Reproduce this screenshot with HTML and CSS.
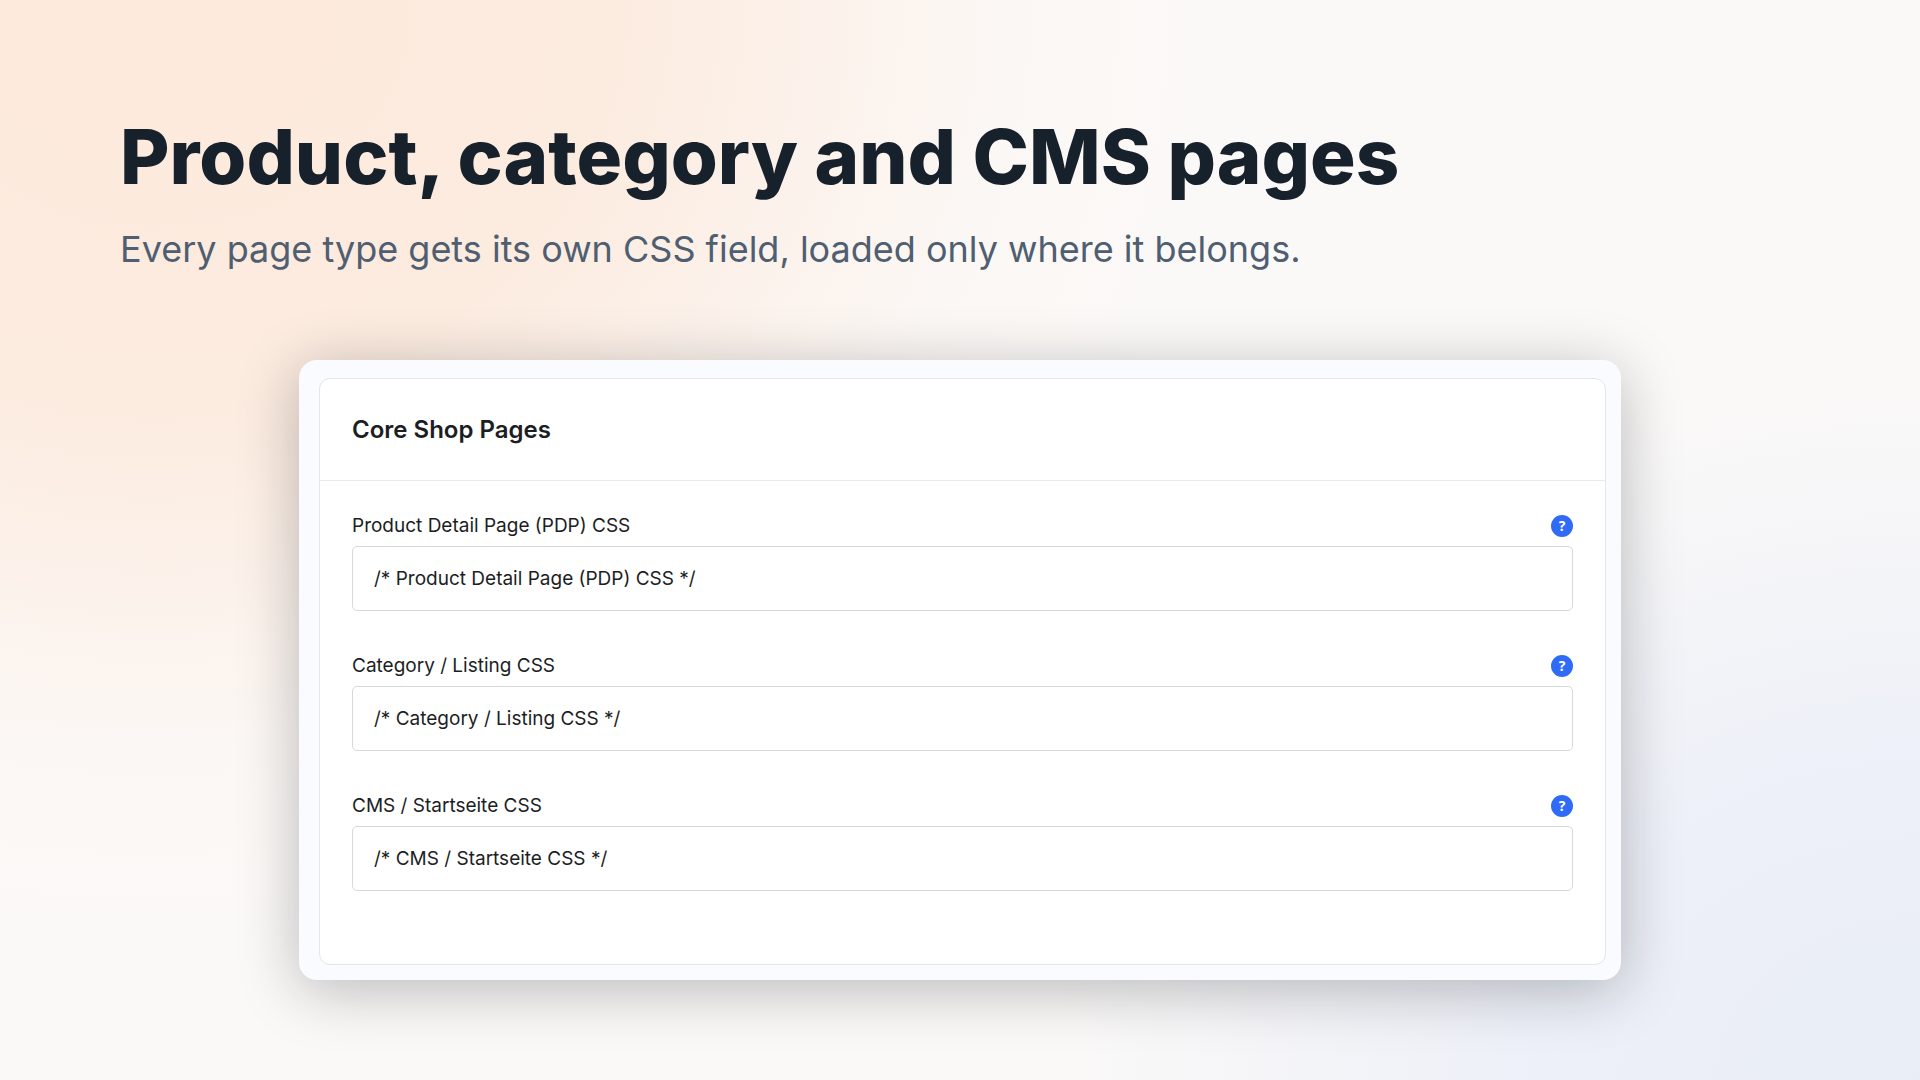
FILE: index.html
```html
<!DOCTYPE html>
<html lang="en">
<head>
    <meta charset="utf-8">
    <title>Product, category and CMS pages</title>
    <link rel="stylesheet" href="styles.css">
</head>
<body>
    <header class="intro">
        <h1>Product, category and CMS pages</h1>
        <p>Every page type gets its own CSS field, loaded only where it belongs.</p>
    </header>

    <main class="frame">
        <section class="card">
            <h2>Core Shop Pages</h2>
            <form class="fields">
                <div class="field">
                    <div class="field-head">
                        <label for="pdp-css">Product Detail Page (PDP) CSS</label>
                        <button type="button" class="help">?</button>
                    </div>
                    <input type="text" id="pdp-css" value="/* Product Detail Page (PDP) CSS */">
                </div>
                <div class="field">
                    <div class="field-head">
                        <label for="listing-css">Category / Listing CSS</label>
                        <button type="button" class="help">?</button>
                    </div>
                    <input type="text" id="listing-css" value="/* Category / Listing CSS */">
                </div>
                <div class="field">
                    <div class="field-head">
                        <label for="cms-css">CMS / Startseite CSS</label>
                        <button type="button" class="help">?</button>
                    </div>
                    <input type="text" id="cms-css" value="/* CMS / Startseite CSS */">
                </div>
            </form>
        </section>
    </main>
</body>
</html>
```
FILE: styles.css
```css
* {
    box-sizing: border-box;
}

body {
    font-family: Inter, "Liberation Sans", sans-serif;
    margin: 0;
    padding: 110px 120px 100px;
    min-height: 100vh;
    background:
        radial-gradient(ellipse 56% 88% at 8% 0%, #feeadd 0%, #fcebdf 42%, rgba(252, 245, 240, 0.5) 78%, rgba(251, 249, 248, 0) 100%),
        radial-gradient(ellipse 45% 65% at 100% 100%, #e9edf6 0%, #edf0f8 45%, rgba(249, 250, 250, 0) 100%),
        #fbf9f8;
}

.intro h1 {
    margin: 0;
    font-size: 76px;
    line-height: 92px;
    font-weight: 800;
    color: #16212c;
}

.intro p {
    margin: 25px 0 0;
    font-size: 36px;
    line-height: 44px;
    color: #4f5e70;
}

.frame {
    max-width: 1322px;
    margin: 89px auto 0;
    padding: 18px 15px 15px 20px;
    border-radius: 18px;
    background-color: #fafbff;
    box-shadow: 0 10px 60px rgba(10, 14, 20, 0.27);
}

.card {
    border: 1px solid #e5e6eb;
    border-radius: 11px;
    background-color: #fff;
    color: #1c1e24;
}

.card h2 {
    margin: 0;
    padding: 32px 32px 31px;
    font-size: 24px;
    line-height: 38px;
    font-weight: 600;
    border-bottom: 1px solid #e9eaec;
}

.fields {
    display: flex;
    flex-direction: column;
    gap: 43px;
    padding: 33px 32px 73px;
}

.field-head {
    display: flex;
    align-items: center;
    justify-content: space-between;
    margin-bottom: 8px;
    font-size: 19px;
    line-height: 24px;
}

.help {
    width: 22px;
    height: 22px;
    padding: 0;
    border: none;
    border-radius: 50%;
    background-color: #2f6bf6;
    color: #fff;
    font: bold 14px/22px "Open Sans", sans-serif;
    text-align: center;
    cursor: pointer;
}

.field input {
    display: block;
    width: 100%;
    height: 65px;
    padding: 0 21px;
    border: 1px solid #d6d8dc;
    border-radius: 5px;
    background-color: #fff;
    color: #1c1e24;
    font: inherit;
    font-size: 19px;
}
```
